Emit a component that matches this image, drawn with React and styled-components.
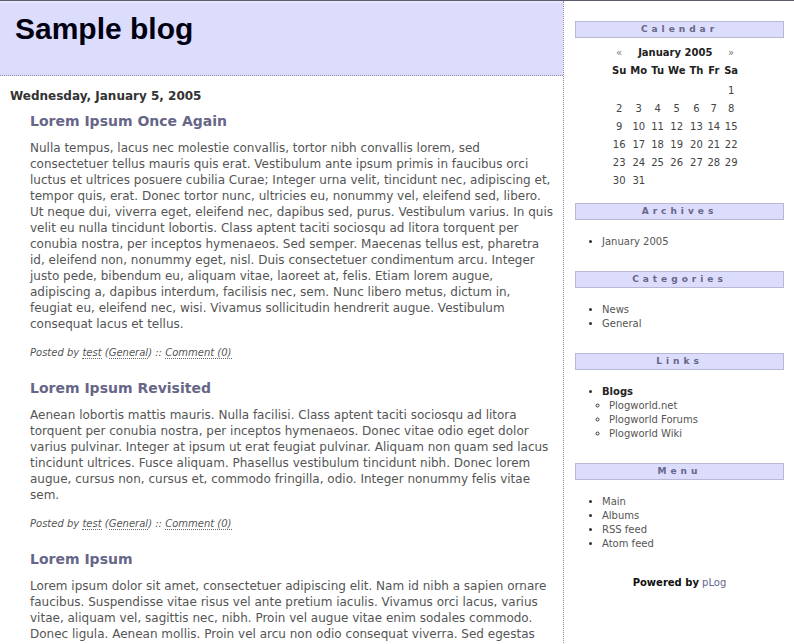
import React from 'react';
import styled, { createGlobalStyle } from 'styled-components';

const GlobalStyle = createGlobalStyle`
  html, body {
    margin: 0;
    padding: 0;
    background: #fff;
  }
  body {
    font-family: "DejaVu Sans", Verdana, sans-serif;
    color: #555;
  }
`;

const posts = [
  {
    title: 'Lorem Ipsum Once Again',
    text:
      'Nulla tempus, lacus nec molestie convallis, tortor nibh convallis lorem, sed consectetuer tellus mauris quis erat. Vestibulum ante ipsum primis in faucibus orci luctus et ultrices posuere cubilia Curae; Integer urna velit, tincidunt nec, adipiscing et, tempor quis, erat. Donec tortor nunc, ultricies eu, nonummy vel, eleifend sed, libero. Ut neque dui, viverra eget, eleifend nec, dapibus sed, purus. Vestibulum varius. In quis velit eu nulla tincidunt lobortis. Class aptent taciti sociosqu ad litora torquent per conubia nostra, per inceptos hymenaeos. Sed semper. Maecenas tellus est, pharetra id, eleifend non, nonummy eget, nisl. Duis consectetuer condimentum arcu. Integer justo pede, bibendum eu, aliquam vitae, laoreet at, felis. Etiam lorem augue, adipiscing a, dapibus interdum, facilisis nec, sem. Nunc libero metus, dictum in, feugiat eu, eleifend nec, wisi. Vivamus sollicitudin hendrerit augue. Vestibulum consequat lacus et tellus.',
  },
  {
    title: 'Lorem Ipsum Revisited',
    text:
      'Aenean lobortis mattis mauris. Nulla facilisi. Class aptent taciti sociosqu ad litora torquent per conubia nostra, per inceptos hymenaeos. Donec vitae odio eget dolor varius pulvinar. Integer at ipsum ut erat feugiat pulvinar. Aliquam non quam sed lacus tincidunt ultrices. Fusce aliquam. Phasellus vestibulum tincidunt nibh. Donec lorem augue, cursus non, cursus et, commodo fringilla, odio. Integer nonummy felis vitae sem.',
  },
  {
    title: 'Lorem Ipsum',
    text:
      'Lorem ipsum dolor sit amet, consectetuer adipiscing elit. Nam id nibh a sapien ornare faucibus. Suspendisse vitae risus vel ante pretium iaculis. Vivamus orci lacus, varius vitae, aliquam vel, sagittis nec, nibh. Proin vel augue vitae enim sodales commodo. Donec ligula. Aenean mollis. Proin vel arcu non odio consequat viverra. Sed egestas lacinia lacus. Donec eu nisl. Vestibulum ante ipsum primis in faucibus orci luctus et ultrices posuere cubilia Curae.',
  },
];

const weeks = [
  ['', '', '', '', '', '', '1'],
  ['2', '3', '4', '5', '6', '7', '8'],
  ['9', '10', '11', '12', '13', '14', '15'],
  ['16', '17', '18', '19', '20', '21', '22'],
  ['23', '24', '25', '26', '27', '28', '29'],
  ['30', '31', '', '', '', '', ''],
];

const App = () => {
  return (
    <>
      <GlobalStyle />
      <Page>
        <Main>
          <Header>
            <BlogTitle>Sample blog</BlogTitle>
          </Header>
          <Content>
            <DateHeading>Wednesday, January 5, 2005</DateHeading>
            {posts.map((post) => (
              <Post key={post.title}>
                <PostTitle>{post.title}</PostTitle>
                <PostText>{post.text}</PostText>
                <PostMeta>
                  Posted by <MetaLink>test</MetaLink> (<MetaLink>General</MetaLink>) ::{' '}
                  <MetaLink>Comment (0)</MetaLink>
                </PostMeta>
              </Post>
            ))}
          </Content>
        </Main>

        <Sidebar>
          <SideHeading>Calendar</SideHeading>
          <Calendar>
            <thead>
              <tr>
                <NavCell>«</NavCell>
                <MonthCell colSpan={5}>January 2005</MonthCell>
                <NavCell>»</NavCell>
              </tr>
              <DayNames>
                {['Su', 'Mo', 'Tu', 'We', 'Th', 'Fr', 'Sa'].map((d) => (
                  <th key={d}>{d}</th>
                ))}
              </DayNames>
            </thead>
            <tbody>
              {weeks.map((week, i) => (
                <tr key={i}>
                  {week.map((day, j) => (
                    <DayCell key={j}>{day}</DayCell>
                  ))}
                </tr>
              ))}
            </tbody>
          </Calendar>

          <SideHeading>Archives</SideHeading>
          <SideList>
            <li>January 2005</li>
          </SideList>

          <SideHeading>Categories</SideHeading>
          <SideList>
            <li>News</li>
            <li>General</li>
          </SideList>

          <SideHeading>Links</SideHeading>
          <SideList>
            <li>
              <GroupName>Blogs</GroupName>
              <SubList>
                <li>Plogworld.net</li>
                <li>Plogworld Forums</li>
                <li>Plogworld Wiki</li>
              </SubList>
            </li>
          </SideList>

          <SideHeading>Menu</SideHeading>
          <SideList>
            <li>Main</li>
            <li>Albums</li>
            <li>RSS feed</li>
            <li>Atom feed</li>
          </SideList>

          <Powered>
            <b>Powered by</b> <PoweredLink>pLog</PoweredLink>
          </Powered>
        </Sidebar>
      </Page>
    </>
  );
};

export default App;

// STYLING
const Page = styled.div`
  display: flex;
  align-items: stretch;
  border-top: 1px solid #5c5c70;
  min-height: 643px;
`;

const Main = styled.div`
  width: 563px;
  flex-shrink: 0;
  border-right: 1px dotted #8a8a9a;
`;

const Header = styled.div`
  height: 75px;
  box-sizing: border-box;
  background: #dcdcfc;
  border-top: 2px solid #e6e6fc;
  border-bottom: 1px dotted #9090b0;
  padding: 8px 15px 0;
`;

const BlogTitle = styled.h1`
  margin: 0;
  font-family: "Liberation Sans", Arial, sans-serif;
  font-size: 30px;
  font-weight: bold;
  color: #000010;
  line-height: 35px;
`;

const Content = styled.div`
  padding: 12px 7px 20px 10px;
`;

const DateHeading = styled.h2`
  margin: 0 0 8px;
  font-size: 12px;
  line-height: 16px;
  font-weight: bold;
  color: #333;
`;

const Post = styled.div`
  padding-left: 20px;
  margin-bottom: 19px;
`;

const PostTitle = styled.h3`
  margin: 0;
  font-size: 14px;
  line-height: 18px;
  font-weight: bold;
  color: #666688;
`;

const PostText = styled.p`
  margin: 10px 0 0;
  font-size: 12px;
  line-height: 16px;
  color: #555;
`;

const PostMeta = styled.div`
  margin-top: 14px;
  font-size: 10px;
  line-height: 14px;
  font-style: italic;
  color: #555;
`;

const MetaLink = styled.span`
  color: #555;
  border-bottom: 1px dotted #666;
`;

const Sidebar = styled.div`
  flex: 1;
  padding: 20px 10px 20px 11px;
  font-size: 10px;
  color: #555;
`;

const SideHeading = styled.div`
  height: 15px;
  line-height: 15px;
  background: #dcdcfc;
  border: 1px solid #b8b8d4;
  text-align: center;
  font-size: 9px;
  font-weight: bold;
  letter-spacing: 4px;
  color: #666688;
`;

const Calendar = styled.table`
  border-collapse: collapse;
  margin: 6px 0 13px 35px;
  font-size: 10px;
  color: #444;

  td,
  th {
    padding: 3px 2px;
    line-height: 12px;
  }
`;

const NavCell = styled.td`
  text-align: center;
  color: #777;
`;

const MonthCell = styled.td`
  text-align: center;
  font-weight: bold;
  color: #222;
`;

const DayNames = styled.tr`
  th {
    font-weight: bold;
    color: #222;
    padding-bottom: 5px;
  }
`;

const DayCell = styled.td`
  text-align: center;
`;

const SideList = styled.ul`
  margin: 15px 0 22px;
  padding-left: 27px;
  line-height: 14px;
  list-style: disc;

  li::marker {
    color: #333;
  }
`;

const GroupName = styled.span`
  font-weight: bold;
  color: #222;
`;

const SubList = styled.ul`
  margin: 0;
  padding-left: 7px;
  list-style: circle;
`;

const Powered = styled.div`
  margin-top: 25px;
  text-align: center;
  line-height: 14px;
  color: #111;
`;

const PoweredLink = styled.span`
  color: #666688;
`;
